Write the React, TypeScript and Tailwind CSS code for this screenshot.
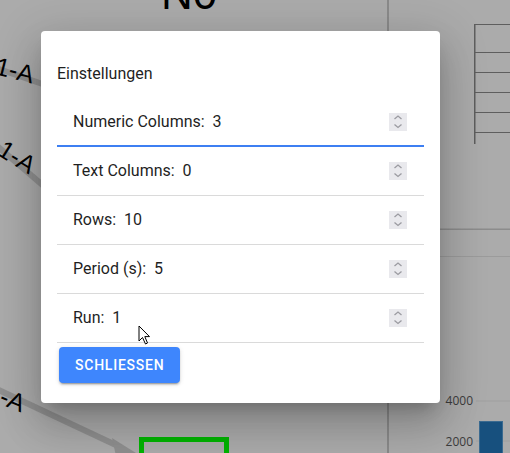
import React from "react";

const rows = [
  { label: "Numeric Columns:", value: "3", active: true },
  { label: "Text Columns:", value: "0" },
  { label: "Rows:", value: "10" },
  { label: "Period (s):", value: "5" },
  { label: "Run:", value: "1" },
];

function Spinner() {
  return (
    <div className="w-[18px] h-[18px] bg-[#e9e9ed] flex items-center justify-center">
      <svg width="18" height="18" viewBox="0 0 18 18" fill="none">
        <path d="M5.5 6 L9 3 L12.5 6" stroke="#9b9ba1" strokeWidth="1.3" />
        <path d="M5.5 11.5 L9 14.5 L12.5 11.5" stroke="#9b9ba1" strokeWidth="1.3" />
      </svg>
    </div>
  );
}

function Background() {
  return (
    <svg className="absolute inset-0" width="510" height="453" viewBox="0 0 510 453">
      <text x="161" y="9" fontSize="44" fontFamily="'Liberation Sans', Arial, sans-serif" fill="#000">N0</text>
      <rect x="387" y="0" width="2" height="453" fill="#8a8a8a" />
      <rect x="388" y="228.5" width="122" height="1.5" fill="#8c8c8c" />
      <rect x="388" y="256" width="122" height="1" fill="#9b9b9b" />
      <rect x="474" y="24" width="1.5" height="120" fill="#5e5e5e" />
      {[24, 52, 72, 92, 112, 132].map((y) => (
        <rect key={y} x="474" y={y} width="36" height="1" fill="#5e5e5e" />
      ))}
      <rect x="476" y="400.5" width="34" height="1" fill="#a0a0a0" />
      <rect x="476" y="440.5" width="34" height="1" fill="#a0a0a0" />
      <text x="473" y="405" textAnchor="end" fontSize="12" fontFamily="'Open Sans', sans-serif" fill="#3c3c3c">4000</text>
      <text x="473" y="445.5" textAnchor="end" fontSize="12" fontFamily="'Open Sans', sans-serif" fill="#3c3c3c">2000</text>
      <rect x="479.5" y="421.5" width="23" height="40" fill="#17507e" stroke="#3a6a90" strokeWidth="1" />
      <path d="M-10 66 L60 90" stroke="#8f8f8f" strokeWidth="6" />
      <path d="M-10 140 L60 200" stroke="#8f8f8f" strokeWidth="6" />
      <path d="M-10 386 L118 446" stroke="#8f8f8f" strokeWidth="6" />
      <path d="M112 438 L136 453 L116 456 Z" fill="#8f8f8f" />
      <text x="0" y="0" fontSize="25" fontFamily="'Liberation Sans', Arial, sans-serif" fill="#000" transform="translate(-6 74) rotate(14)">1-A</text>
      <text x="0" y="0" fontSize="25" fontFamily="'Liberation Sans', Arial, sans-serif" fill="#000" transform="translate(-4 154) rotate(32)">1-A</text>
      <text x="0" y="0" fontSize="25" fontFamily="'Liberation Sans', Arial, sans-serif" fill="#000" transform="translate(-15 398) rotate(22)">1-A</text>
      <rect x="141.5" y="439.5" width="85" height="30" fill="none" stroke="#00b400" strokeWidth="5" />
    </svg>
  );
}

export default function App() {
  return (
    <div
      className="relative w-[510px] h-[453px] overflow-hidden bg-[#ababab]"
      style={{ fontFamily: "Roboto, 'Liberation Sans', sans-serif" }}
    >
      <Background />
      <div className="absolute left-[41px] top-[31px] w-[399px] h-[372px] bg-white rounded-[4px] shadow-[0px_11px_15px_-7px_rgba(0,0,0,0.2),0px_24px_38px_3px_rgba(0,0,0,0.14),0px_9px_46px_8px_rgba(0,0,0,0.12)] px-4 flex flex-col">
        <div className="pt-[31px] text-base leading-6 text-[#1f1f1f]">Einstellungen</div>
        <div className="mt-[12px] flex flex-col">
          {rows.map((r) => (
            <div
              key={r.label}
              className={
                r.active
                  ? "h-[49px] flex items-center justify-between pl-4 pr-[17px] border-b-2 border-[#3d7ff2]"
                  : "h-[49px] flex items-center justify-between pl-4 pr-[17px] border-b border-[#dadada]"
              }
            >
              <span className="text-base leading-6 text-[#1f1f1f] whitespace-pre">
                {r.label + "  " + r.value}
              </span>
              <Spinner />
            </div>
          ))}
        </div>
        <div className="mt-[4px] ml-[2px]">
          <button className="h-[36px] px-4 rounded-[4px] bg-[#3e86fd] text-white text-sm font-medium tracking-[0.055em] shadow-[0px_3px_1px_-2px_rgba(0,0,0,0.2),0px_2px_2px_0px_rgba(0,0,0,0.14),0px_1px_5px_0px_rgba(0,0,0,0.12)]">
            SCHLIESSEN
          </button>
        </div>
      </div>
      <svg className="absolute left-[138px] top-[325px]" width="14" height="21" viewBox="0 0 14 21">
        <path d="M1 1 L1 16 L4.5 12.5 L7.5 19 L9.5 18 L6.8 11.6 L11.5 11.6 Z" fill="#fff" stroke="#000" strokeWidth="1" strokeLinejoin="round" />
      </svg>
    </div>
  );
}
